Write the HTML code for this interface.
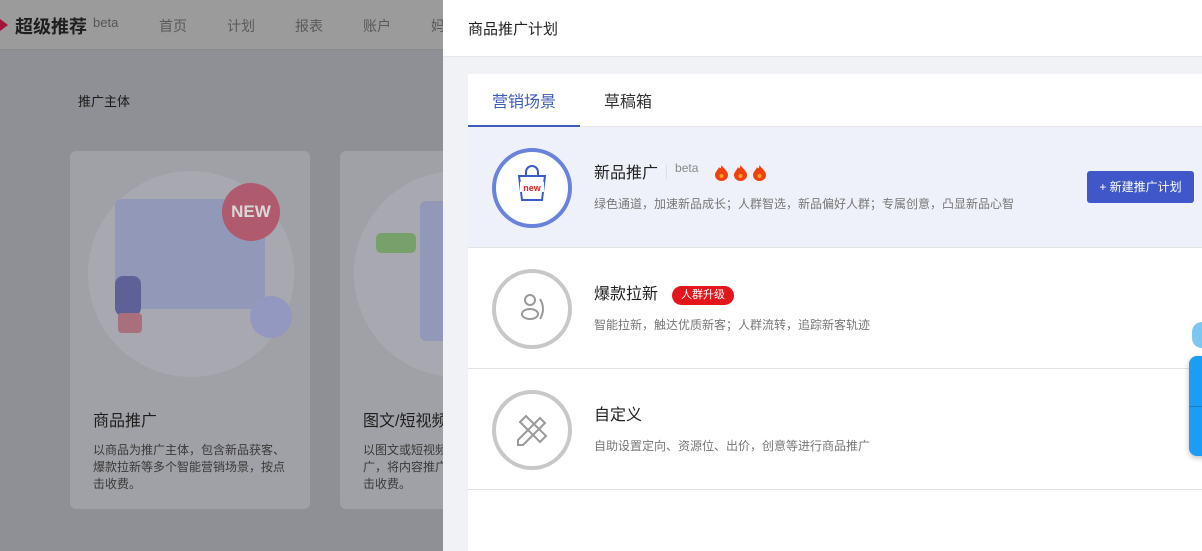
<!DOCTYPE html>
<html><head><meta charset="utf-8"><style>
*{margin:0;padding:0;box-sizing:border-box}
body{width:1202px;height:551px;overflow:hidden;position:relative;font-family:"Liberation Sans","Noto Sans CJK SC",sans-serif;background:#8f9095}
.hdr{position:absolute;left:0;top:0;width:443px;height:50px;background:#9b9b9b;border-bottom:1px solid #8a8a8a}
.logo{position:absolute;left:15px;top:13px;font-size:18px;font-weight:bold;color:#1e1e1e}
.logo sup{font-size:13px;font-weight:normal;color:#555;margin-left:6px;vertical-align:6px}
.tri{position:absolute;left:0;top:19px;width:0;height:0;border-left:8px solid #a0153a;border-top:6px solid transparent;border-bottom:6px solid transparent}
.nav{position:absolute;top:16px;font-size:14px;color:#5a5a5a}
.lbl{position:absolute;left:78px;top:91px;font-size:13px;color:#1a1a1a}
.card{position:absolute;top:151px;width:240px;height:358px;background:#a0a1a6;border-radius:6px}
.card h3{position:absolute;left:23px;top:256px;font-size:16px;font-weight:normal;color:#1e1e1e}
.card p{position:absolute;left:23px;top:291px;width:200px;font-size:12px;line-height:17px;color:#3a3a3a}
.drawer{position:absolute;left:443px;top:0;width:759px;height:551px;background:#f0f2f5}
.dh{height:57px;background:#fff;border-bottom:1px solid #e6e6e6;padding:18px 25px;font-size:15px;color:#222}
.panel{position:absolute;left:25px;top:74px;width:740px;height:477px;background:#fff}
.tabs{height:53px;border-bottom:1px solid #e6e6e6;position:relative}
.tab{position:absolute;top:14px;font-size:16px;color:#333}
.row{position:absolute;left:0;width:740px;height:121px;border-bottom:1px solid #e3e3e3}
.ic{position:absolute;left:24px;top:21px;width:80px;height:80px;border-radius:50%;border:4px solid #c8c8c8;background:#fff}
.t{position:absolute;left:126px;top:32px;font-size:16px;color:#222}
.d{position:absolute;left:126px;top:68px;font-size:12px;color:#777}
.fl{display:inline-block;width:15px;height:17px;margin-right:4px;vertical-align:-3px}
</style></head><body>
<div class="hdr"><div class="tri"></div><div class="logo">超级推荐<sup>beta</sup></div>
<span class="nav" style="left:159px">首页</span><span class="nav" style="left:227px">计划</span><span class="nav" style="left:295px">报表</span><span class="nav" style="left:363px">账户</span><span class="nav" style="left:431px">妈</span></div>
<div class="lbl">推广主体</div>
<div class="card" style="left:70px">
<div style="position:absolute;left:18px;top:20px;width:206px;height:206px;border-radius:50%;background:#a8a9b0"></div>
<div style="position:absolute;left:45px;top:48px;width:150px;height:110px;background:#9299b8;border-radius:6px"></div>
<div style="position:absolute;left:152px;top:32px;width:58px;height:58px;border-radius:50%;background:#b05a6e;color:#d8d8d8;font-weight:bold;font-size:17px;text-align:center;line-height:58px">NEW</div>
<div style="position:absolute;left:180px;top:145px;width:42px;height:42px;border-radius:50%;background:#9298bf"></div>
<div style="position:absolute;left:45px;top:125px;width:26px;height:40px;background:#5d6196;border-radius:8px"></div>
<div style="position:absolute;left:48px;top:162px;width:24px;height:20px;background:#a8707c;border-radius:4px"></div>
<h3>商品推广</h3><p>以商品为推广主体，包含新品获客、爆款拉新等多个智能营销场景，按点击收费。</p></div>
<div class="card" style="left:340px">
<div style="position:absolute;left:14px;top:20px;width:206px;height:206px;border-radius:50%;background:#a8a9b0"></div>
<div style="position:absolute;left:80px;top:50px;width:30px;height:140px;background:#9299b8;border-radius:6px"></div>
<div style="position:absolute;left:36px;top:82px;width:40px;height:20px;background:#78a06a;border-radius:5px"></div>
<h3>图文/短视频</h3><p>以图文或短视频内容为推广主体推广，将内容推广给潜在消费者，按点击收费。</p></div>
<div class="drawer">
<div class="dh">商品推广计划</div>
<div class="panel">
<div class="tabs"><span class="tab" style="left:24px;color:#3d5bb8">营销场景</span><span class="tab" style="left:136px">草稿箱</span>
<div style="position:absolute;left:0;bottom:-1px;width:112px;height:2px;background:#3d5bb8"></div></div>
<div class="row" style="top:53px;background:#eef1f9">
<div class="ic" style="border-color:#6a82dc"><svg width="72" height="72" viewBox="0 0 72 72" style="position:absolute;left:0;top:0"><path d="M30 24v-4a6 6 0 0 1 12 0v4" fill="none" stroke="#3b5bc5" stroke-width="2"/><path d="M23 24h26l-3 24H26z" fill="#fff" stroke="#3b5bc5" stroke-width="2"/><rect x="24" y="30" width="24" height="10" fill="#fff"/><text x="36" y="39" font-size="9" font-weight="bold" fill="#d22" text-anchor="middle" font-family="Liberation Sans">new</text></svg></div>
<div class="t">新品推广<span style="display:inline-block;width:1px;height:14px;background:#ddd;margin:0 8px 0 8px;vertical-align:-1px"></span><span style="font-size:12px;color:#888;vertical-align:6px">beta</span><span style="margin-left:16px"><svg class="fl" viewBox="0 0 15 17"><path d="M7.5 1C9 4 14 7 14 11a6.5 6 0 0 1-13 0C1 8 4 6 5 3c1 2 2 2 2.5-2z" fill="#f0400f"/><circle cx="7.5" cy="12" r="2" fill="#f9a21c"/></svg><svg class="fl" viewBox="0 0 15 17"><path d="M7.5 1C9 4 14 7 14 11a6.5 6 0 0 1-13 0C1 8 4 6 5 3c1 2 2 2 2.5-2z" fill="#f0400f"/><circle cx="7.5" cy="12" r="2" fill="#f9a21c"/></svg><svg class="fl" viewBox="0 0 15 17"><path d="M7.5 1C9 4 14 7 14 11a6.5 6 0 0 1-13 0C1 8 4 6 5 3c1 2 2 2 2.5-2z" fill="#f0400f"/><circle cx="7.5" cy="12" r="2" fill="#f9a21c"/></svg></span></div>
<div class="d">绿色通道，加速新品成长；人群智选，新品偏好人群；专属创意，凸显新品心智</div>
<div style="position:absolute;left:619px;top:44px;width:107px;height:32px;background:#3f57c9;border-radius:3px;color:#fff;font-size:12px;line-height:32px;text-align:center">+ 新建推广计划</div></div>
<div class="row" style="top:174px">
<div class="ic"><svg width="72" height="72" viewBox="0 0 72 72" style="position:absolute;left:0;top:0"><circle cx="34" cy="27" r="5" fill="none" stroke="#999" stroke-width="2"/><ellipse cx="34" cy="41" rx="8" ry="5" fill="none" stroke="#999" stroke-width="2"/><path d="M44 26q6 10 0 20" fill="none" stroke="#999" stroke-width="2"/></svg></div>
<div class="t">爆款拉新<span style="display:inline-block;margin-left:14px;background:#e4161b;color:#fff;font-size:11px;padding:0 9px;height:19px;line-height:19px;border-radius:10px;vertical-align:1px">人群升级</span></div>
<div class="d">智能拉新，触达优质新客；人群流转，追踪新客轨迹</div></div>
<div class="row" style="top:295px">
<div class="ic"><svg width="72" height="72" viewBox="0 0 72 72" style="position:absolute;left:0;top:0"><path d="M22 46l22-22 5 5-22 22h-5z" fill="none" stroke="#999" stroke-width="2"/><path d="M24 28l6-6 20 20-6 6z" fill="none" stroke="#999" stroke-width="2"/></svg></div>
<div class="t">自定义</div>
<div class="d">自助设置定向、资源位、出价，创意等进行商品推广</div></div>
</div>
<div style="position:absolute;left:746px;top:356px;width:20px;height:100px;background:#1b9cf5;border-radius:8px 0 0 8px;box-shadow:0 2px 6px rgba(0,0,0,.25)"><div style="position:absolute;top:50px;left:0;width:20px;height:1px;background:#1580c8"></div></div>
<div style="position:absolute;left:749px;top:322px;width:16px;height:26px;background:#7cc6f2;border-radius:10px 0 0 10px"></div>
</div>
</body></html>
